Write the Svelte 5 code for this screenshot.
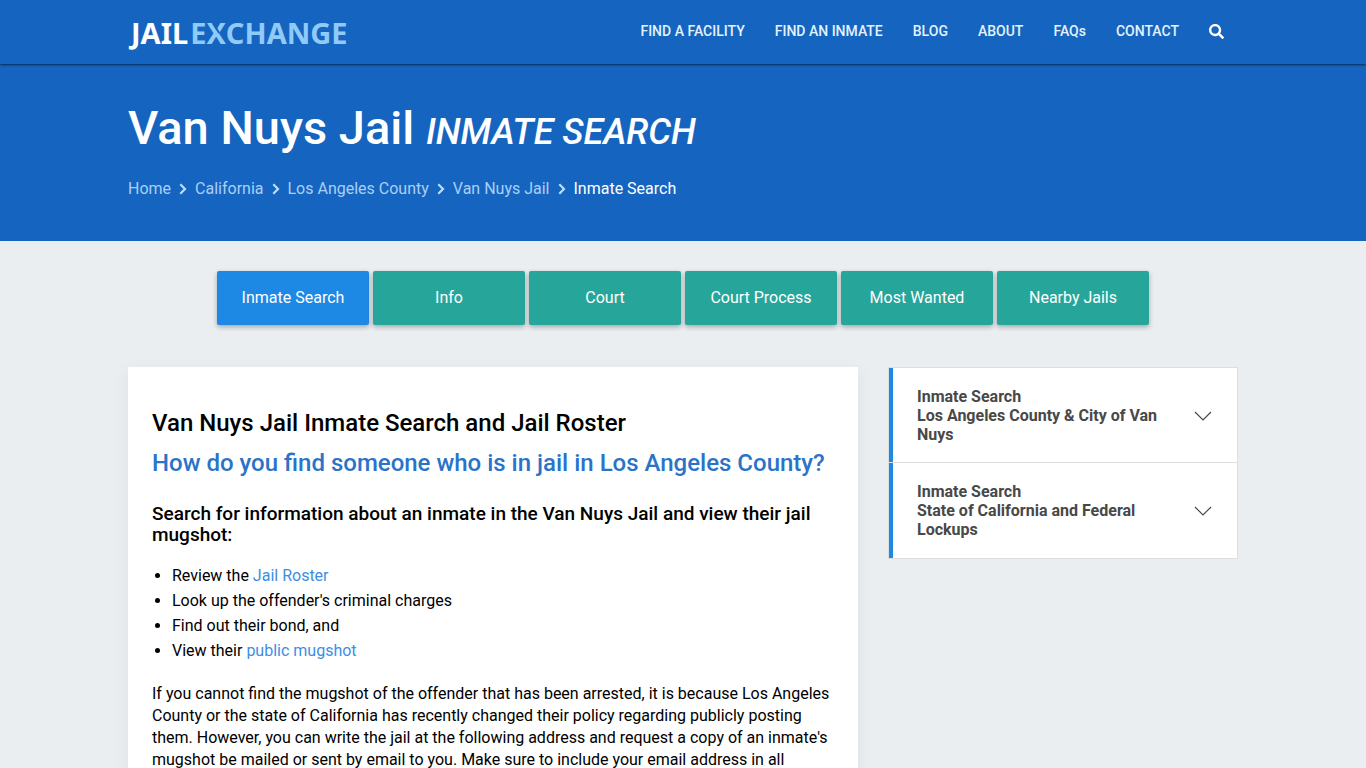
<script>
	const navItems = ['FIND A FACILITY', 'FIND AN INMATE', 'BLOG', 'ABOUT', 'FAQs', 'CONTACT'];
	const crumbs = ['Home', 'California', 'Los Angeles County', 'Van Nuys Jail'];
	const tabs = ['Inmate Search', 'Info', 'Court', 'Court Process', 'Most Wanted', 'Nearby Jails'];
	const panels = ['Los Angeles County & City of Van Nuys', 'State of California and Federal Lockups'];

	let activeTab = $state('Inmate Search');
</script>

<header class="topbar">
	<div class="container topbar-inner">
		<a class="logo" href="#home"><span class="jail">JAIL</span>E<span class="cut">X</span>CHANGE</a>
		<nav class="main-nav" aria-label="Main">
			{#each navItems as item}
				<a href="#nav">{item}</a>
			{/each}
			<button class="search-btn" aria-label="Search">
				<svg viewBox="0 0 512 512" width="15" height="15" fill="currentColor">
					<path d="M505 442.700 405.300 343c-4.500-4.500-10.600-7-17-7H372c27.600-35.300 44-79.700 44-128C416 93.100 322.900 0 208 0S0 93.100 0 208s93.100 208 208 208c48.300 0 92.700-16.400 128-44v16.300c0 6.400 2.500 12.500 7 17l99.700 99.700c9.400 9.400 24.600 9.400 33.900 0l28.300-28.300c9.400-9.400 9.400-24.600.1-34zM208 336c-70.700 0-128-57.200-128-128 0-70.700 57.200-128 128-128 70.700 0 128 57.200 128 128 0 70.700-57.200 128-128 128z" />
				</svg>
			</button>
		</nav>
	</div>
</header>

<section class="hero">
	<div class="container">
		<h1>Van Nuys Jail <em>INMATE SEARCH</em></h1>
		<nav class="crumbs" aria-label="Breadcrumb">
			{#each crumbs as crumb}
				<a href="#crumb">{crumb}</a>
				<svg viewBox="0 0 8 12" width="8" height="12" fill="none" stroke="currentColor" stroke-width="2.200">
					<path d="M1.300 1.300 6 6 1.300 10.700" />
				</svg>
			{/each}
			<span>Inmate Search</span>
		</nav>
	</div>
</section>

<main class="container">
	<div class="tabs">
		{#each tabs as tab}
			<button class:active={activeTab === tab} onclick={() => (activeTab = tab)}>{tab}</button>
		{/each}
	</div>

	<div class="columns">
		<article class="card">
			<h2>Van Nuys Jail Inmate Search and Jail Roster</h2>
			<h2 class="question">How do you find someone who is in jail in Los Angeles County?</h2>
			<h3>Search for information about an inmate in the Van Nuys Jail and view their jail mugshot:</h3>
			<ul>
				<li>Review the <a href="#roster">Jail Roster</a></li>
				<li>Look up the offender's criminal charges</li>
				<li>Find out their bond, and</li>
				<li>View their <a href="#mugshot">public mugshot</a></li>
			</ul>
			<p>
				If you cannot find the mugshot of the offender that has been arrested, it is because Los Angeles
				County or the state of California has recently changed their policy regarding publicly posting
				them. However, you can write the jail at the following address and request a copy of an inmate's
				mugshot be mailed or sent by email to you. Make sure to include your email address in all
			</p>
		</article>

		<aside class="accordion">
			{#each panels as panel}
				<button class="panel" aria-expanded="false">
					<span>Inmate Search<br />{panel}</span>
					<svg viewBox="0 0 18 10" width="18" height="10" fill="none" stroke="currentColor" stroke-width="1.200">
						<path d="M1 1 9 9 17 1" />
					</svg>
				</button>
			{/each}
		</aside>
	</div>
</main>

<style>
	:global(body) {
		background: #eaeef1;
		color: #000;
		font-family: Roboto, 'Liberation Sans', sans-serif;
		font-size: 16px;
	}

	* {
		box-sizing: border-box;
	}

	a {
		color: #3d8ee2;
		text-decoration: none;
	}

	button {
		border: 0;
		font: inherit;
		cursor: pointer;
	}

	.container {
		max-width: 1110px;
		margin: 0 auto;
	}

	/* top bar */
	.topbar {
		position: relative;
		background: #1565c0;
		box-shadow: 0 1px 2px rgba(0, 0, 0, 0.6);
	}

	.topbar-inner {
		display: flex;
		align-items: center;
		justify-content: space-between;
		height: 64px;
	}

	.logo {
		padding: 2px 0 0 3px;
		color: #90caf9;
		font: bold 29px/40px 'Noto Sans', 'Open Sans', sans-serif;
	}

	.jail {
		margin-right: 2px;
		color: #fff;
	}

	/* slit that parts the upper arm of the X */
	.cut {
		position: relative;
	}

	.cut::after {
		content: '';
		position: absolute;
		top: 9px;
		left: 9px;
		width: 2px;
		height: 12px;
		background: #1565c0;
		transform: rotate(-32deg);
	}

	.main-nav {
		display: flex;
		align-items: center;
		gap: 30px;
		padding: 0 14px 2px 0;
	}

	.main-nav a {
		color: #e3f2fd;
		font-size: 14px;
		font-weight: 500;
		line-height: 20px;
	}

	.search-btn {
		display: flex;
		padding: 0;
		background: none;
		color: #fff;
	}

	/* page heading */
	.hero {
		padding: 36px 0 42px;
		background: #1565c0;
		color: #fff;
	}

	h1 {
		margin: 0 0 18px;
		font-size: 47px;
		font-weight: 500;
		line-height: 56px;
	}

	h1 em {
		font-size: 36px;
	}

	.crumbs {
		display: flex;
		align-items: center;
		gap: 8px;
		line-height: 21px;
		color: #bbdefb;
	}

	.crumbs a {
		color: #a9cff5;
	}

	.crumbs span {
		color: #fff;
	}

	/* section tabs */
	.tabs {
		display: flex;
		justify-content: center;
		gap: 4px;
		padding: 30px 0 42px;
	}

	.tabs button {
		width: 152px;
		height: 54px;
		padding: 0 0 2px;
		border-radius: 2px;
		background: #26a69a;
		color: #fff;
		box-shadow: 0 2px 5px rgba(0, 0, 0, 0.3);
	}

	.tabs button.active {
		background: #1e88e5;
	}

	.columns {
		display: grid;
		grid-template-columns: 730fr 350fr;
		align-items: start;
		gap: 30px;
	}

	.card {
		padding: 40px 24px 24px;
		background: #fff;
		box-shadow: 0 4px 16px rgba(0, 0, 0, 0.06);
	}

	h2 {
		margin: 0 0 8px;
		font-size: 24px;
		font-weight: 500;
		line-height: 32px;
	}

	.question {
		margin-bottom: 24px;
		color: #2a73c8;
	}

	h3 {
		margin: 0 0 18px;
		font-size: 19px;
		font-weight: 500;
		line-height: 21px;
	}

	ul {
		margin: 0 0 20px;
		padding-left: 20px;
	}

	li {
		line-height: 25px;
	}

	p {
		margin: 0;
		line-height: 22px;
	}

	/* sidebar */
	.accordion {
		border: 1px solid #dcdfe2;
	}

	.panel {
		display: flex;
		align-items: center;
		justify-content: space-between;
		width: 100%;
		padding: 19px 25px 19px 24px;
		border-left: 4px solid #1e88e5;
		background: #fff;
		color: #484848;
		font-weight: 700;
		line-height: 19px;
		text-align: left;
	}

	.panel + .panel {
		box-shadow: 0 -1px #dcdfe2;
	}

	.panel span {
		max-width: 250px;
	}
</style>
